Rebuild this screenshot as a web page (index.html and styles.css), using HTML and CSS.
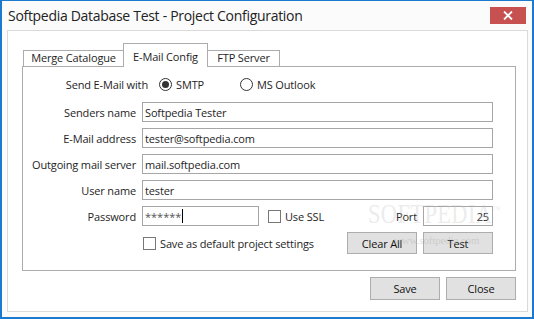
FILE: index.html
```html
<!DOCTYPE html>
<html>
<head>
<meta charset="utf-8">
<link rel="stylesheet" href="styles.css">
</head>
<body>
<div class="window">
  <div class="titlebar">
    <span class="title">Softpedia Database Test - Project Configuration</span>
    <div class="close">
      <svg width="10" height="9" viewBox="0 0 10 9"><path d="M1 0.5 L9 8.5 M9 0.5 L1 8.5" stroke="#fff" stroke-width="1.8" fill="none"/></svg>
    </div>
  </div>
  <div class="client">
    <div class="tabs">
      <div class="tab tab-first">Merge Catalogue</div>
      <div class="tab tab-active">E-Mail Config</div>
      <div class="tab tab-last">FTP Server</div>
    </div>
    <div class="panel">
      <div class="row row-send">
        <span class="label label-send">Send E-Mail with</span>
        <span class="radio radio-first"><span class="circle checked"></span>SMTP</span>
        <span class="radio"><span class="circle"></span>MS Outlook</span>
      </div>
      <div class="row"><span class="label">Senders name</span><div class="input wide">Softpedia Tester</div></div>
      <div class="row"><span class="label">E-Mail address</span><div class="input wide">tester@softpedia.com</div></div>
      <div class="row"><span class="label">Outgoing mail server</span><div class="input wide">mail.softpedia.com</div></div>
      <div class="row"><span class="label">User name</span><div class="input wide">tester</div></div>
      <div class="row">
        <span class="label">Password</span>
        <div class="input pw">******<span class="caret"></span></div>
        <span class="check check-ssl"><span class="box"></span>Use SSL</span>
        <span class="port-label">Port</span>
        <div class="input port">25</div>
      </div>
      <div class="row row-last">
        <span class="label"></span>
        <span class="check check-default"><span class="box"></span>Save as default project settings</span>
        <div class="btns">
          <div class="btn">Clear All</div>
          <div class="btn">Test</div>
        </div>
      </div>
    </div>
    <div class="footer">
      <div class="btn btn-foot">Save</div>
      <div class="btn btn-foot">Close</div>
    </div>
  </div>
  <div class="watermark">SOFTPEDIA<sup>™</sup></div>
  <div class="watermark-url">www.softpedia.com</div>
</div>
</body>
</html>
```

FILE: styles.css
```css
* { box-sizing: border-box; }
html, body { margin: 0; padding: 0; }
body {
  font-family: "Open Sans", "Noto Sans", sans-serif;
  font-size: 11px;
  letter-spacing: -0.15px;
  color: #1e1e1e;
  background: #fff;
}
.window {
  position: relative;
  width: 534px;
  height: 319px;
  border: 2px solid #1c79d0;
  border-top-width: 1px;
  background: #fbfbfb;
  display: flex;
  flex-direction: column;
}
.titlebar {
  height: 29px;
  display: flex;
  align-items: flex-start;
  justify-content: space-between;
}
.title {
  font-size: 14px;
  letter-spacing: -0.3px;
  padding-left: 6px;
  padding-top: 5px;
  color: #222;
}
.close {
  width: 36px;
  height: 17px;
  margin-top: 6px;
  margin-right: 6px;
  background: #c75050;
  display: flex;
  align-items: center;
  justify-content: center;
}
.close svg { display: block; }
.client {
  margin: 0 4px 5px 5px;
  width: 521px;
  height: 282px;
  border: 1px solid #dadada;
  background: #fff;
  padding: 12px 11px 0 14px;
}
.tabs {
  display: flex;
  align-items: flex-end;
  height: 23px;
  padding-left: 1px;
}
.tab {
  height: 16px;
  border-top: 1px solid #acacac;
  background: #fff;
  text-align: center;
  line-height: 14px;
}
.tab-first { width: 100px; border-left: 1px solid #acacac; }
.tab-active {
  position: relative;
  z-index: 1;
  width: 85px;
  height: 24px;
  margin-bottom: -1px;
  border-left: 1px solid #acacac;
  border-right: 1px solid #acacac;
  padding-top: 2px;
  line-height: 21px;
}
.tab-last { width: 72px; border-right: 1px solid #acacac; }
.panel {
  width: 494px;
  height: 205px;
  border: 1px solid #acacac;
  padding: 7px 22px 0 0;
  display: flex;
  flex-direction: column;
  gap: 6px;
}
.row {
  display: flex;
  align-items: center;
  height: 20px;
}
.row-send { margin-bottom: 2px; }
.label {
  width: 113px;
  margin-right: 6px;
  text-align: right;
  flex: none;
}
.label-send { width: 125px; margin-right: 11px; }
.radio {
  display: flex;
  align-items: center;
}
.radio-first { width: 81px; }
.circle {
  width: 13px;
  height: 13px;
  border: 1px solid #333;
  border-radius: 50%;
  margin-right: 4px;
  display: flex;
  align-items: center;
  justify-content: center;
  background: #fff;
}
.circle.checked::after {
  content: "";
  width: 7px;
  height: 7px;
  border-radius: 50%;
  background: #333;
}
.input {
  height: 20px;
  border: 1px solid #a6a6a6;
  background: #fff;
  padding-left: 2px;
  line-height: 17px;
  display: flex;
  align-items: center;
}
.wide { width: 351px; }
.pw { width: 117px; color: #555; letter-spacing: 0; }
.caret { width: 1px; height: 14px; background: #000; margin-left: 1px; }
.check { display: flex; align-items: center; }
.box {
  width: 13px;
  height: 13px;
  border: 1px solid #777;
  background: #fff;
  margin-right: 4px;
}
.check-ssl { margin-left: 9px; }
.port-label { margin-left: auto; margin-right: 6px; }
.port { width: 70px; justify-content: flex-end; padding-right: 3px; }
.row-last { height: 22px; }
.check-default { margin-left: 1px; }
.btns { margin-left: auto; display: flex; gap: 6px; }
.btn {
  width: 70px;
  height: 22px;
  background: #e1e1e1;
  border: 1px solid #adadad;
  display: flex;
  align-items: center;
  justify-content: center;
  color: #111;
}
.footer {
  width: 494px;
  display: flex;
  justify-content: flex-end;
  gap: 6px;
  margin-top: 6px;
}
.btn-foot { height: 23px; }
.watermark {
  position: absolute;
  left: 366px;
  top: 197px;
  font-family: "Liberation Serif", serif;
  font-size: 28px;
  letter-spacing: 0.5px;
  color: rgba(190, 190, 190, 0.3);
  transform: scaleX(0.8);
  transform-origin: left top;
  pointer-events: none;
}
.watermark sup { font-size: 10px; }
.watermark-url {
  position: absolute;
  left: 392px;
  top: 233px;
  font-family: "Liberation Serif", serif;
  font-size: 11px;
  color: rgba(170, 170, 170, 0.4);
  pointer-events: none;
}
```
